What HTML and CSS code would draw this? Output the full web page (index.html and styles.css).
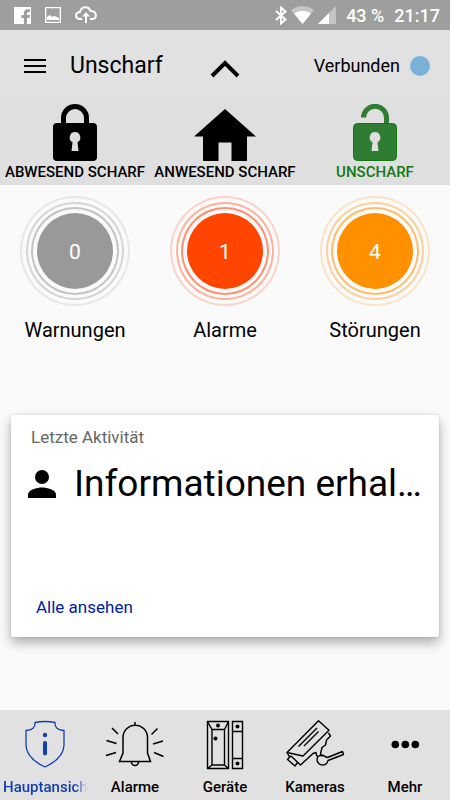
FILE: index.html
```html
<!DOCTYPE html>
<html lang="de">
<head>
<meta charset="utf-8">
<meta name="viewport" content="width=device-width, initial-scale=1">
<title>Unscharf</title>
<link rel="stylesheet" href="styles.css">
</head>
<body>
<div class="status-bar">
  <div class="status-group">
    <svg class="status-facebook" width="17" height="17" viewBox="0 0 17 17" aria-hidden="true"><path fill="#fff" d="M0 0h17v17h-4v-6h2.500l.4-3H13V6.500q0-1.500 1.400-1.500H16V2.300h-2.500Q10 2.300 10 6v2H7.500v3H10v6H0z"/></svg>
    <svg class="status-picture" width="16" height="16" viewBox="0 0 16 16" aria-hidden="true"><path fill="none" stroke="#fff" stroke-width="1.300" d="M.7.700h14.600v14.600H.7z"/><path fill="#fff" d="M2 13V10l3-2 2 2 2-1 2 .5 3 1.500v2z"/></svg>
    <svg width="22" height="18" viewBox="0 0 22 18" aria-hidden="true"><path fill="none" stroke="#fff" stroke-width="2" d="M7 13H4.500Q1 12.500 1 9.500T5 6Q6 1.500 10 1.200T15.500 5Q20.500 5 20.800 9T17 13h-2M11 17V8"/><path fill="#fff" d="M7 10.500 11 6l4 4.500z"/></svg>
  </div>
  <div class="status-group status-right">
    <svg width="12" height="19" viewBox="0 0 12 19" aria-hidden="true"><path fill="none" stroke="#fff" stroke-width="2" d="m1 5 9.500 8.500L6 17.500V1.500l4.500 4L1 14"/></svg>
    <svg width="23" height="18" viewBox="0 0 23 18" aria-hidden="true"><path fill="#c4c4c4" d="M0 4q11.500-8 23 0L11.500 18z"/><path fill="#fff" d="M3 7.500q8.500-5.500 17 0L11.500 18z"/></svg>
    <svg width="18" height="18" viewBox="0 0 18 18" aria-hidden="true"><path fill="#c4c4c4" d="M18 0v18H0z"/><path fill="#fff" d="M11 7v11H0z"/></svg>
    <span class="battery">43 %</span>
    <span class="clock">21:17</span>
  </div>
</div>

<header class="header">
  <div class="toolbar">
    <button class="icon-button" type="button" aria-label="Menü">
      <svg width="24" height="16" viewBox="0 0 24 16"><path stroke="#000" stroke-width="2" d="M1 2h22M1 8h22M1 14h22"/></svg>
    </button>
    <h1 class="title">Unscharf</h1>
    <button class="icon-button" type="button" aria-label="Einklappen">
      <svg width="32" height="24" viewBox="0 0 32 24"><path fill="none" stroke="#000" stroke-width="4" d="M3 22 16 9l13 13"/></svg>
    </button>
    <div class="connection">Verbunden<span class="connection-dot"></span></div>
  </div>
  <div class="modes">
    <button class="mode" type="button">
      <svg width="44" height="57" viewBox="0 0 44 57" aria-hidden="true"><path fill="none" stroke="#000" stroke-width="5" d="M10.500 20v-6a11.500 11.500 0 0 1 23 0v6"/><rect y="19" width="44" height="38" rx="4"/><path fill="#dfdfdf" d="M22 28a5.500 5.500 0 0 0-2.500 10.300L18.500 47h7l-1-8.700A5.500 5.500 0 0 0 22 28z"/></svg>
      <span>ABWESEND SCHARF</span>
    </button>
    <button class="mode" type="button">
      <svg width="62" height="57" viewBox="0 0 62 57" aria-hidden="true"><path d="m31 5 31 27.500h-9V57H37.500V38.500h-13V57H9V32.500H0z"/></svg>
      <span>ANWESEND SCHARF</span>
    </button>
    <button class="mode mode-active" type="button">
      <svg width="44" height="57" viewBox="0 0 44 57" aria-hidden="true"><path fill="none" stroke="#2e7d32" stroke-width="5" d="M10.500 13.500a11.500 11.500 0 0 1 23 .5v6"/><rect x=".5" y="19.500" width="43" height="37" rx="4" fill="#2e7d32" stroke="#107a12"/><path fill="#dfdfdf" d="M22 28a5.500 5.500 0 0 0-2.500 10.300L18.500 47h7l-1-8.700A5.500 5.500 0 0 0 22 28z"/></svg>
      <span>UNSCHARF</span>
    </button>
  </div>
</header>

<main class="content">
  <section class="counters">
    <a class="counter counter-warning" href="#warnungen"><span class="counter-value">0</span><span>Warnungen</span></a>
    <a class="counter counter-alarm" href="#alarme"><span class="counter-value">1</span><span>Alarme</span></a>
    <a class="counter counter-fault" href="#stoerungen"><span class="counter-value">4</span><span>Störungen</span></a>
  </section>
  <section class="card">
    <h2 class="card-title">Letzte Aktivität</h2>
    <div class="activity">
      <svg class="activity-icon" width="28" height="28" viewBox="0 0 28 28" aria-hidden="true"><circle cx="14" cy="7" r="7"/><path d="M0 28v-3.500C0 20 9 17.500 14 17.500s14 2.500 14 7V28z"/></svg>
      <p class="activity-text">Informationen erhal…</p>
    </div>
    <a class="card-link" href="#aktivitaet">Alle ansehen</a>
  </section>
</main>

<nav class="tabs">
  <a class="tab tab-active" href="#haupt">
    <svg width="70" height="50" viewBox="0 0 70 50" aria-hidden="true"><path fill="none" stroke="#1340b0" stroke-width="1.300" d="M25 2.500Q35 .5 45 2.500q-.5 7.500 9 8V25q0 13-19 22Q16 38 16 25V10.500q9.500-.5 9-8z"/><circle cx="35" cy="15" r="2.200" fill="#1340b0"/><path stroke="#1340b0" stroke-width="4" stroke-linecap="round" d="M35 23v10.500"/></svg>
    <span class="tab-label">Hauptansich</span>
  </a>
  <a class="tab" href="#alarme">
    <svg width="70" height="50" viewBox="0 0 70 50" aria-hidden="true"><g fill="none" stroke="#000" stroke-width="1.500"><path d="M35 2v4M23 33V17.500a12 12 0 0 1 24.500 0V33l3 8.500h-31zM31.500 42a3.500 3.500 0 0 0 7 0"/><path d="m12 8 6 6M6.500 20.500l10 3M6 35.500l10-3M57.500 8.500l-6 6M63 21l-10 3M63.500 36.500l-9.500-4"/></g></svg>
    <span class="tab-label">Alarme</span>
  </a>
  <a class="tab" href="#geraete">
    <svg width="70" height="50" viewBox="0 0 70 50" aria-hidden="true"><g fill="none" stroke="#000" stroke-width="1.400"><path d="M17.500 1.500h21v47h-21zM22 9.500h12.500v35.500H22zM17.500 1.500l4.500 8M38.500 1.500l-4 8M17.500 48.500 22 45M38.500 48.500l-4-3.500M42.500 1.500h10v47h-10zM42.500 11.500h10M42.500 38.500h10"/></g><circle cx="28" cy="5.500" r="2"/><circle cx="25.500" cy="18.500" r="2"/><circle cx="47.500" cy="6.500" r="2"/><circle cx="47.500" cy="43.500" r="2"/></svg>
    <span class="tab-label">Geräte</span>
  </a>
  <a class="tab" href="#kameras">
    <svg width="70" height="50" viewBox="0 0 70 50" aria-hidden="true"><g fill="none" stroke="#000" stroke-width="1.400" stroke-linejoin="round"><path d="m38.500.8 10.500 9.500L23 36 7 32.500zM37 8 18.500 26.500M38.500 11.500 24 26"/><path d="m7 32.500 2 3.500 2.500.5L20.500 45 33 33.500l3-1 .5 3 1.500 1M48.500 13l2 3-4 4-1 5-3.500 2.500L40.500 34l2 2.500M10 36.500 7.500 39.500 15 46l2.500-3.500"/><path d="M47.500 37.500 62.500 31.500l1 3L48 40.500a5.500 5.500 0 1 1-10-4q4-2.500 7 0z"/></g></svg>
    <span class="tab-label">Kameras</span>
  </a>
  <a class="tab" href="#mehr">
    <svg width="70" height="50" viewBox="0 0 70 50" aria-hidden="true"><circle cx="25.300" cy="24.500" r="3.800"/><circle cx="35.300" cy="24.500" r="3.800"/><circle cx="45.300" cy="24.500" r="3.800"/></svg>
    <span class="tab-label">Mehr</span>
  </a>
</nav>
</body>
</html>
```
FILE: styles.css
```css
* {
  box-sizing: border-box;
}

body {
  margin: 0;
  min-height: 100vh;
  display: flex;
  flex-direction: column;
  background: #fafafa;
  color: #000;
  font-family: Roboto, "Liberation Sans", sans-serif;
}

a {
  color: inherit;
  text-decoration: none;
}

button {
  padding: 0;
  border: 0;
  background: none;
  color: inherit;
  font: inherit;
}

svg {
  display: block;
  flex: none;
}

.status-bar {
  display: flex;
  justify-content: space-between;
  align-items: center;
  height: 30px;
  padding: 0 10px 0 14px;
  background: #9e9e9e;
  color: #fff;
  font-size: 18px;
  font-weight: 500;
}

.status-group {
  display: flex;
  align-items: center;
  gap: 12px;
}

.status-facebook,
.status-picture {
  margin-right: 2px;
}

.status-right {
  gap: 4px;
}

.battery {
  margin: 0 6px;
}

.header {
  background: #e1e1e1;
}

.toolbar {
  display: grid;
  grid-template-columns: 24px 162px 32px 1fr;
  align-items: center;
  height: 71px;
  padding: 0 20px 0 23px;
}

.title {
  margin: 0 0 0 23px;
  font-size: 23px;
  font-weight: 400;
}

.connection {
  display: flex;
  justify-content: flex-end;
  align-items: center;
  gap: 10px;
  font-size: 18px;
}

.connection-dot {
  width: 20px;
  height: 20px;
  border-radius: 50%;
  background: #7bb0d7;
}

.modes {
  display: grid;
  grid-template-columns: repeat(3, 1fr);
  height: 84px;
  padding-top: 3px;
  background: #dfdfdf;
}

.mode {
  display: flex;
  flex-direction: column;
  align-items: center;
  gap: 2px;
  font-size: 15px;
  font-weight: 500;
  line-height: 18px;
  white-space: nowrap;
}

.mode-active {
  color: #107a12;
}

.content {
  flex: 1;
  padding: 11px 11px 73px;
}

.counters {
  display: grid;
  grid-template-columns: repeat(3, 1fr);
  margin: 0 -11px;
}

.counter {
  display: flex;
  flex-direction: column;
  align-items: center;
  gap: 12px;
  font-size: 20px;
  line-height: 24px;
}

.counter-value {
  display: flex;
  justify-content: center;
  align-items: center;
  width: 76px;
  height: 76px;
  margin: 17px;
  padding-top: 2px;
  border-radius: 50%;
  background: var(--tone);
  color: #fff;
  font-size: 21px;
  box-shadow:
    0 0 0 4px #fafafa,
    0 0 0 6px var(--ring-near),
    0 0 0 9px #fafafa,
    0 0 0 11px var(--ring-mid),
    0 0 0 15px #fafafa,
    0 0 0 17px var(--ring-far);
}

.counter-warning {
  --tone: #999;
  --ring-near: #c4c4c4;
  --ring-mid: #d5d5d5;
  --ring-far: #e7e7e7;
}

.counter-alarm {
  --tone: #ff4500;
  --ring-near: #fc9272;
  --ring-mid: #fcb29b;
  --ring-far: #fbd3c8;
}

.counter-fault {
  --tone: #ff9100;
  --ring-near: #fcbf70;
  --ring-mid: #fbd19b;
  --ring-far: #fbe4c6;
}

.card {
  display: flex;
  flex-direction: column;
  align-items: flex-start;
  min-height: 222px;
  margin-top: 73px;
  padding: 11px 12px 19px 17px;
  border-radius: 2px;
  background: #fff;
  box-shadow: 0 6px 12px rgba(0, 0, 0, 0.3), 0 0 3px rgba(0, 0, 0, 0.12);
}

.card-title {
  margin: 0 3px;
  color: #666;
  font-size: 17px;
  font-weight: 400;
  line-height: 22px;
}

.activity {
  display: flex;
  align-items: center;
  gap: 18px;
  width: 100%;
  margin-top: 12px;
}

.activity-text {
  flex: 1;
  min-width: 0;
  margin: 0;
  overflow: hidden;
  font-size: 37px;
  line-height: 48px;
  text-overflow: ellipsis;
  white-space: nowrap;
}

.card-link {
  margin: auto 8px 0;
  color: #0020a0;
  font-size: 17px;
  line-height: 22px;
}

.tabs {
  display: grid;
  grid-template-columns: repeat(5, 1fr);
  height: 90px;
  padding-top: 10px;
  background: #e1e1e1;
}

.tab {
  display: flex;
  flex-direction: column;
  align-items: center;
  gap: 7px;
  min-width: 0;
  padding: 0 3px;
  font-size: 15px;
  font-weight: 500;
  line-height: 20px;
}

.tab-label {
  max-width: 100%;
  white-space: nowrap;
}

.tab-active {
  color: #1340b0;
}

.tab-active .tab-label {
  mask-image: linear-gradient(to right, #000 85%, transparent);
}
```
